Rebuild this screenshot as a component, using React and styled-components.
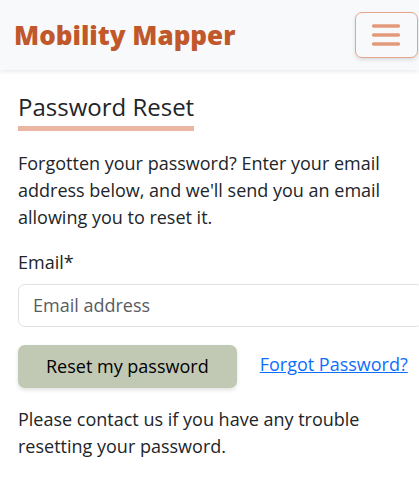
import React from "react";
import styled, { createGlobalStyle } from "styled-components";

const GlobalStyle = createGlobalStyle`
  *, *::before, *::after { box-sizing: border-box; }
  body {
    margin: 0;
    overflow-x: hidden;
    background: #fff;
    color: #212529;
    font-family: "Open Sans", sans-serif;
    font-size: 18px;
    line-height: 27px;
  }
`;

const Navbar = styled.header`
  display: flex;
  align-items: center;
  justify-content: space-between;
  min-height: 70px;
  padding: 0 1px 0 14px;
  background: #f8f9fa;
  box-shadow: 0 2px 4px rgba(0, 0, 0, 0.08);
`;

const Brand = styled.a`
  color: #c0582b;
  font-size: 26px;
  font-weight: 800;
  line-height: 40px;
  text-decoration: none;
`;

const MenuButton = styled.button`
  display: flex;
  align-items: center;
  justify-content: center;
  width: 63px;
  height: 46px;
  padding: 0 1px 0 0;
  color: #e39a7b;
  background: #f8f9fa;
  border: 1px solid #e6a68d;
  border-radius: 7px;
  box-shadow: 0 2px 4px rgba(0, 0, 0, 0.12);
`;

const Content = styled.main`
  padding: 22px 0 0 18px;
`;

const Title = styled.h1`
  width: fit-content;
  margin: 0 0 19px;
  padding-bottom: 4px;
  border-bottom: 5px solid #ebb6a2;
  font-size: 24px;
  font-weight: 400;
  line-height: 30px;
`;

const Text = styled.p`
  max-width: 380px;
  margin: 0 0 18px;
`;

const Field = styled.div`
  display: flex;
  flex-direction: column;
  gap: 8px;
  margin-bottom: 18px;
`;

const Input = styled.input`
  width: calc(100% + 4px);
  height: 43px;
  padding: 0 14px 2px;
  color: #212529;
  background: #fff;
  border: 1px solid #dee2e6;
  border-radius: 7px;
  font: inherit;
  &::placeholder { color: #595c5f; opacity: 1; }
`;

const Actions = styled.div`
  display: flex;
  align-items: flex-start;
  gap: 23px;
  margin-bottom: 18px;
`;

const SubmitButton = styled.button`
  height: 43px;
  padding: 0 28px;
  color: #000;
  background: #c1c9b5;
  border: 0;
  border-radius: 7px;
  box-shadow: 0 2px 4px rgba(0, 0, 0, 0.12);
  font: inherit;
  white-space: nowrap;
`;

const Link = styled.a`
  padding: 6px 0;
  color: #0d6efd;
  text-decoration: underline;
  white-space: nowrap;
`;

export default function App() {
  return (
    <>
      <GlobalStyle />
      <Navbar>
        <Brand href="#">Mobility Mapper</Brand>
        <MenuButton type="button" aria-label="Toggle navigation">
          <svg width="34" height="34" viewBox="0 0 30 30" fill="none" stroke="currentColor" strokeLinecap="round" strokeWidth="3" aria-hidden="true">
            <path d="M4 7h22M4 15h22M4 23h22" />
          </svg>
        </MenuButton>
      </Navbar>
      <Content>
        <Title>Password Reset</Title>
        <Text>
          Forgotten your password? Enter your email address below, and we'll
          send you an email allowing you to reset it.
        </Text>
        <form onSubmit={(event) => event.preventDefault()}>
          <Field>
            <label htmlFor="email">Email*</label>
            <Input id="email" type="email" placeholder="Email address" required />
          </Field>
          <Actions>
            <SubmitButton type="submit">Reset my password</SubmitButton>
            <Link href="#">Forgot Password?</Link>
          </Actions>
        </form>
        <Text>Please contact us if you have any trouble resetting your password.</Text>
      </Content>
    </>
  );
}
